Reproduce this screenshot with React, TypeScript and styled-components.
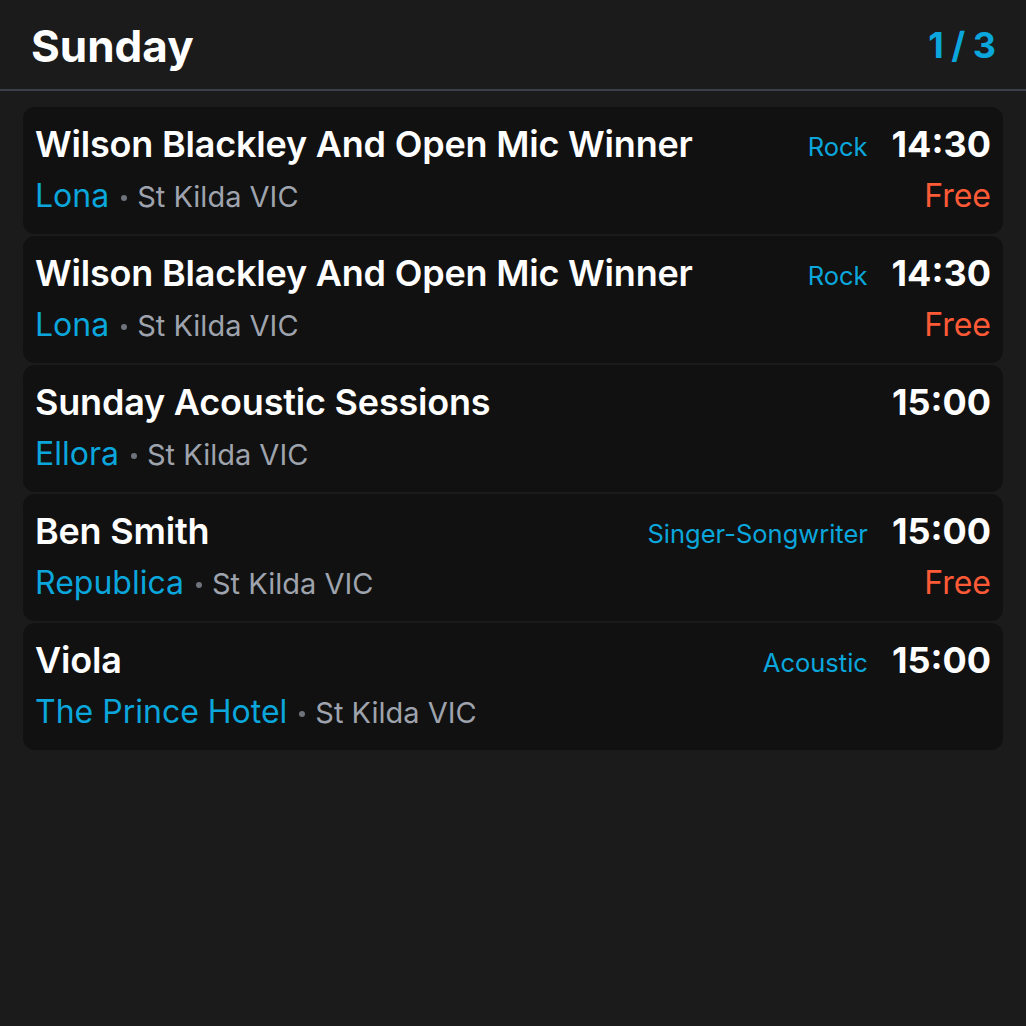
import React from "react";
import styled, { createGlobalStyle } from "styled-components";

const Global = createGlobalStyle`
  html, body { margin: 0; padding: 0; background: #1b1b1b; }
  body { font-family: Inter, "Noto Sans", sans-serif; color: #fff; }
`;

const Page = styled.div`
  width: 1026px;
  height: 1026px;
  background: #1b1b1b;
  display: flex;
  flex-direction: column;
`;

const Header = styled.header`
  display: flex;
  align-items: center;
  justify-content: space-between;
  height: 91px;
  padding: 0 30px 0 31px;
  box-sizing: border-box;
  border-bottom: 2px solid #3a404b;
`;

const Title = styled.h1`
  margin: 3px 0 0 0;
  font-size: 44px;
  font-weight: 700;
  color: #fff;
`;

const Pager = styled.span`
  font-size: 36px;
  font-weight: 700;
  color: #0aa6dc;
  word-spacing: -1px;
`;

const List = styled.div`
  display: flex;
  flex-direction: column;
  gap: 2px;
  padding: 16px 23px 0 23px;
`;

const Card = styled.div`
  background: #111111;
  border-radius: 12px;
  height: 127px;
  box-sizing: border-box;
  padding: 11px 12px 13px 12px;
  display: grid;
  grid-template-columns: 1fr auto auto;
  grid-template-rows: 52px 51px;
  align-items: center;
`;

const EventName = styled.div`
  font-size: 36px;
  font-weight: 600;
  letter-spacing: -0.2px;
  color: #fff;
  white-space: nowrap;
`;

const Genre = styled.div`
  font-size: 25.5px;
  color: #0aa6dc;
  margin-right: 24px;
  padding-top: 4px;
`;

const Time = styled.div`
  font-size: 36px;
  font-weight: 700;
  color: #fff;
  text-align: right;
`;

const VenueLine = styled.div`
  grid-column: 1 / 3;
  display: flex;
  align-items: center;
  white-space: nowrap;
`;

const Venue = styled.span`
  font-size: 32px;
  color: #0aa6dc;
`;

const Dot = styled.span`
  display: inline-block;
  width: 6px;
  height: 6px;
  border-radius: 50%;
  background: #6e737c;
  margin: 4px 10px 0 12px;
`;

const Place = styled.span`
  font-size: 29px;
  color: #9ea3ad;
  padding-top: 2px;
`;

const Price = styled.div`
  font-size: 32px;
  color: #ff5a36;
  text-align: right;
`;

type Ev = { name: string; genre?: string; time: string; venue: string; free?: boolean };

const events: Ev[] = [
  { name: "Wilson Blackley And Open Mic Winner", genre: "Rock", time: "14:30", venue: "Lona", free: true },
  { name: "Wilson Blackley And Open Mic Winner", genre: "Rock", time: "14:30", venue: "Lona", free: true },
  { name: "Sunday Acoustic Sessions", time: "15:00", venue: "Ellora" },
  { name: "Ben Smith", genre: "Singer-Songwriter", time: "15:00", venue: "Republica", free: true },
  { name: "Viola", genre: "Acoustic", time: "15:00", venue: "The Prince Hotel" },
];

export default function App() {
  return (
    <Page>
      <Global />
      <Header>
        <Title>Sunday</Title>
        <Pager>1 / 3</Pager>
      </Header>
      <List>
        {events.map((e, i) => (
          <Card key={i}>
            <EventName>{e.name}</EventName>
            <Genre>{e.genre ?? ""}</Genre>
            <Time>{e.time}</Time>
            <VenueLine>
              <Venue>{e.venue}</Venue>
              <Dot />
              <Place>St Kilda VIC</Place>
            </VenueLine>
            <Price>{e.free ? "Free" : ""}</Price>
          </Card>
        ))}
      </List>
    </Page>
  );
}
